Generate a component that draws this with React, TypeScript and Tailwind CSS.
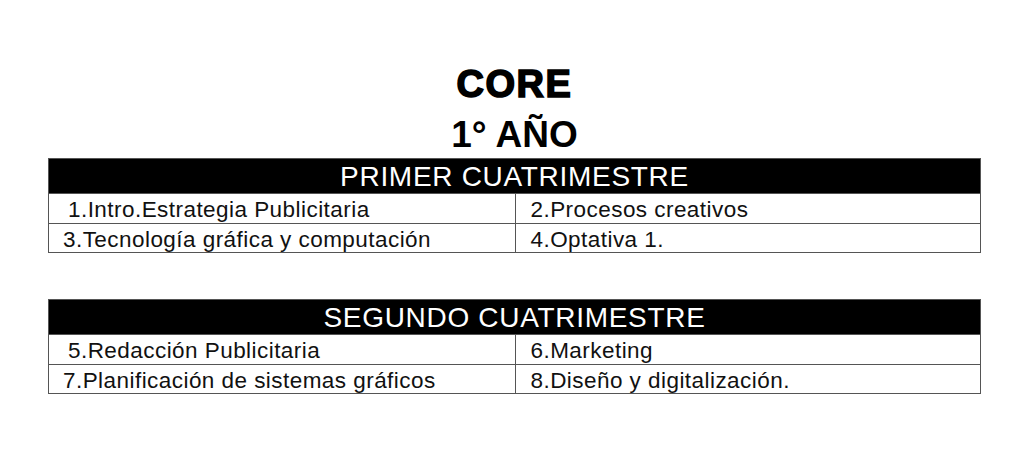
import * as React from "react"

type Term = {
  title: string
  rows: [string, string][]
}

const terms: Term[] = [
  {
    title: "PRIMER CUATRIMESTRE",
    rows: [
      ["1.Intro.Estrategia Publicitaria", "2.Procesos creativos"],
      ["3.Tecnología gráfica y computación", "4.Optativa 1."],
    ],
  },
  {
    title: "SEGUNDO CUATRIMESTRE",
    rows: [
      ["5.Redacción Publicitaria", "6.Marketing"],
      ["7.Planificación de sistemas gráficos", "8.Diseño y digitalización."],
    ],
  },
]

function TermTable({ term }: { term: Term }) {
  return (
    <div className="w-[933px] border border-[#555]">
      {/* header band */}
      <div className="h-[34px] bg-black pt-[2px] text-center text-[28px] leading-[32px] tracking-[0.7px] text-white">
        {term.title}
      </div>
      {term.rows.map(([a, b], i) => (
        <div
          key={i}
          className={`grid grid-cols-2 border-t border-[#555] ${i === 0 ? "h-[30px]" : "h-[29px]"}`}
        >
          <div
            className={`pt-[3px] text-[22.5px] leading-[26px] tracking-[0.45px] text-[#111] ${
              i === 0 ? "pl-[19px]" : "pl-[14px]"
            }`}
          >
            {a}
          </div>
          <div className="border-l border-[#555] pl-[15px] pt-[3px] text-[22.5px] leading-[26px] tracking-[0.45px] text-[#111]">
            {b}
          </div>
        </div>
      ))}
    </div>
  )
}

export default function App() {
  return (
    <div className="h-[462px] w-[1024px] bg-white font-['Liberation_Sans',Arial,sans-serif] text-black">
      <div className="flex flex-col items-center pl-[5px] pt-[65px]">
        <h1 className="text-[38px] font-bold leading-none tracking-[1.5px] [-webkit-text-stroke:1.6px_black]">
          CORE
        </h1>
        <h2 className="mt-[13px] text-[37px] font-bold leading-none">1° AÑO</h2>
      </div>
      <div className="mt-[5px] flex flex-col gap-[46px] pl-[48px]">
        {terms.map((t) => (
          <TermTable key={t.title} term={t} />
        ))}
      </div>
    </div>
  )
}
